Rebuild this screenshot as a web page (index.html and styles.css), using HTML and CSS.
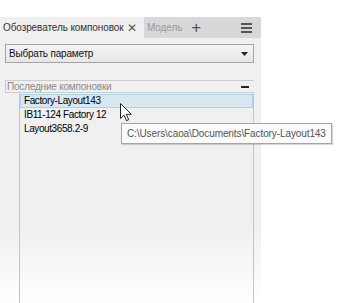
FILE: index.html
```html
<!DOCTYPE html>
<html lang="ru">
<head>
  <meta charset="UTF-8" />
  <link rel="stylesheet" href="styles.css">
</head>
<body>
  <div class="panel">
    <!-- Tabs -->
    <div class="tabbar">
      <div class="tab active">
        <span>Обозреватель компоновок</span>
        <span class="tab-close">✕</span>
      </div>
      <div class="tab">Модель</div>
      <span class="tab-add">+</span>
      <span class="menu">
        <svg width="11" height="10" viewBox="0 0 11 10"><rect y="0" width="11" height="2" fill="#555"/><rect y="4" width="11" height="2" fill="#555"/><rect y="8" width="11" height="2" fill="#555"/></svg>
      </span>
    </div>

    <!-- Param select -->
    <div class="select">
      <span>Выбрать параметр</span>
      <svg width="7" height="4" viewBox="0 0 7 4"><path d="M0 0h7L3.5 4z" fill="#222"/></svg>
    </div>

    <!-- Recent layouts -->
    <div class="section-head">
      <span>Последние компоновки</span>
      <span class="collapse"></span>
    </div>
    <div class="recent-list">
      <div class="item selected">Factory-Layout143</div>
      <div class="item">IB11-124 Factory 12</div>
      <div class="item">Layout3658.2-9</div>

      <div class="tooltip">C:\Users\caoa\Documents\Factory-Layout143</div>
      <svg class="cursor" width="12" height="19" viewBox="0 0 12 19"><path d="M0.5 0.5v15l3.6-3.4 2.4 5.6 2.2-1-2.4-5.4h5z" fill="#fff" stroke="#222" stroke-width="1"/></svg>
    </div>
  </div>
</body>
</html>
```

FILE: styles.css
```css
body {
  margin: 0;
  background: #fff;
  font-family: "Liberation Sans", Arial, sans-serif;
  font-size: 10px;
  color: #222;
}

.panel {
  width: 261px;
  height: 286px;
  margin-top: 17px;
  background: linear-gradient(#f0f0f0 0, #f0f0f0 74%, #fff 100%);
  display: flex;
  flex-direction: column;
}

.tabbar {
  height: 21px;
  display: flex;
  align-items: center;
  background: #d8d8d8;
  font-size: 10px;
  letter-spacing: -0.1px;
  white-space: nowrap;
}

.tab {
  height: 100%;
  display: flex;
  align-items: center;
  padding-left: 3px;
  padding-right: 4px;
  color: #9a9a9a;
}

.tab.active {
  width: 137px;
  background: #f0f0f0;
  color: #333;
  justify-content: space-between;
}

.tab-close {
  font-size: 12px;
  color: #555;
  margin-right: 3px;
}

.tab-add {
  font-size: 17px;
  color: #555;
  margin-left: 5px;
  line-height: 1;
}

.menu {
  margin-left: auto;
  margin-right: 9px;
  display: flex;
}

.select {
  margin: 6px 7px 0 5px;
  height: 17px;
  border: 1px solid #a5a5a5;
  background: linear-gradient(#f4f4f4, #e6e6e6);
  display: flex;
  align-items: center;
  justify-content: space-between;
  padding: 0 5px 0 3px;
  color: #111;
  letter-spacing: -0.2px;
}

.section-head {
  margin: 17px 7px 0 5px;
  height: 11px;
  border: 1px solid #cdcdcd;
  border-right: none;
  display: flex;
  align-items: center;
  justify-content: space-between;
  color: #8a8a8a;
  padding-left: 1px;
  line-height: 11px;
  letter-spacing: -0.2px;
}

.collapse {
  width: 8px;
  height: 2px;
  background: #222;
  margin-right: 5px;
}

.recent-list {
  position: relative;
  flex: 1;
  margin: 0 7px 0 19px;
  border-left: 1px solid #c4c4c4;
  border-right: 1px solid #c4c4c4;
  padding-top: 1px;
}

.item {
  height: 14px;
  line-height: 13px;
  padding-left: 4px;
  color: #000;
  letter-spacing: -0.4px;
}

.item.selected {
  background: #d9e8f0;
  border: 1px solid #a6d2ea;
  height: 12px;
  line-height: 12px;
  padding-left: 3px;
}

.tooltip {
  position: absolute;
  left: 101px;
  top: 30px;
  height: 19px;
  line-height: 19px;
  padding-left: 5px;
  padding-right: 5px;
  background: #fafafa;
  border: 1px solid #a5a5a5;
  box-shadow: 1px 1px 1px rgba(0, 0, 0, 0.15);
  color: #555;
  font-size: 10px;
  letter-spacing: -0.1px;
  white-space: nowrap;
}

.cursor {
  position: absolute;
  left: 100px;
  top: 10px;
}
```
